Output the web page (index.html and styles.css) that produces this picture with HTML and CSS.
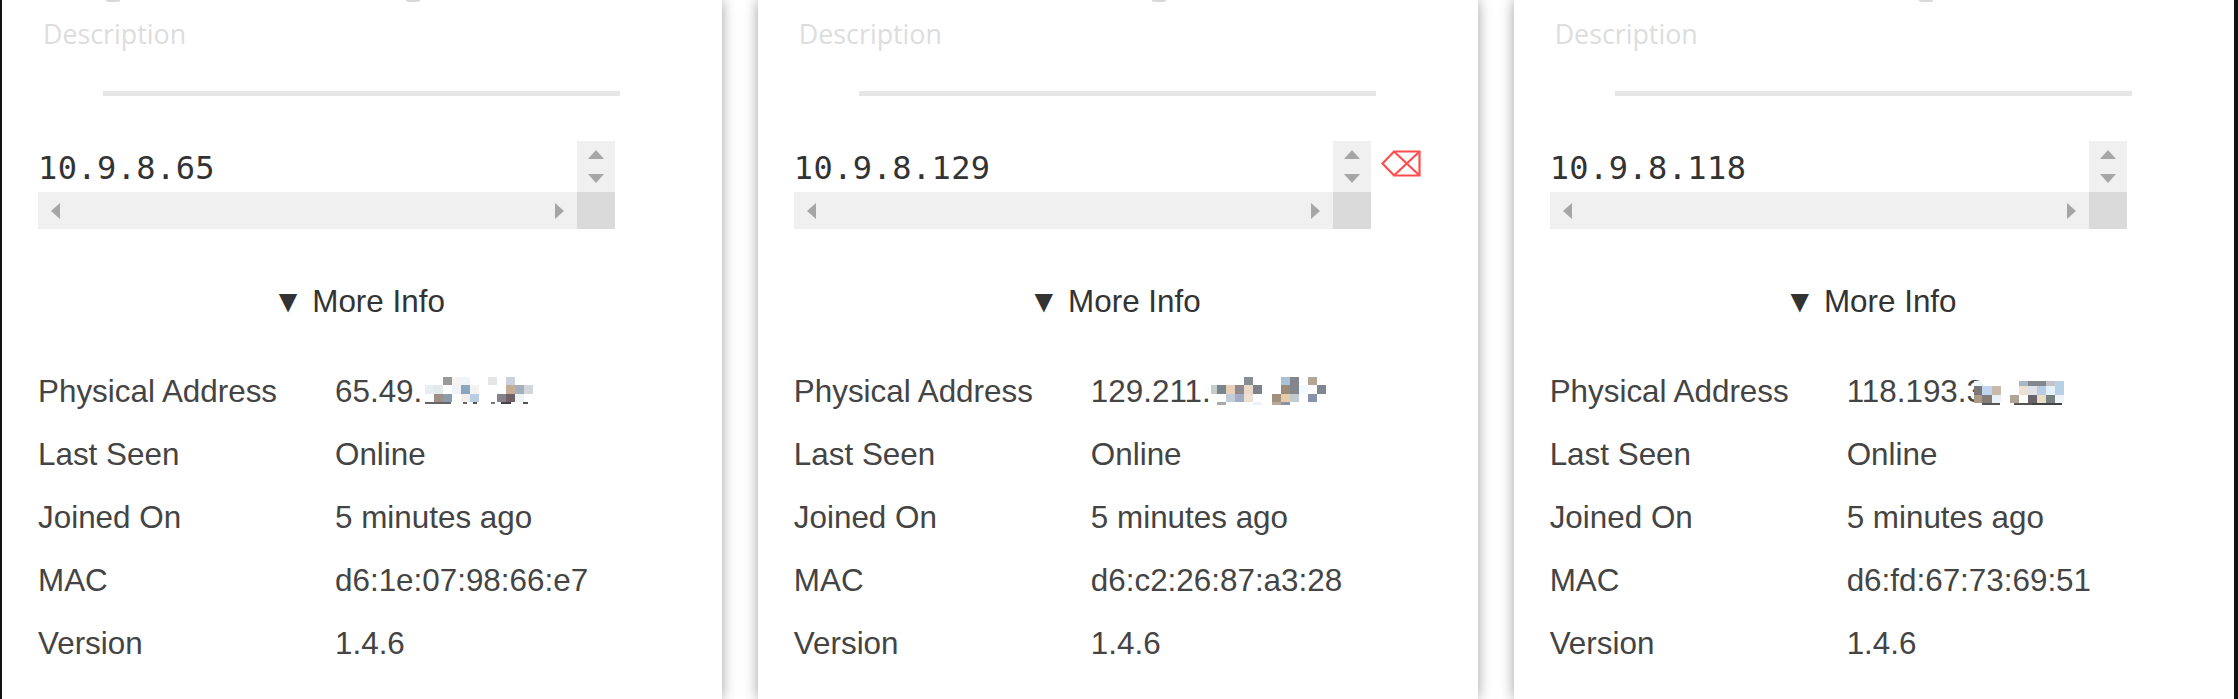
FILE: index.html
```html
<!DOCTYPE html>
<html lang="en">
<head>
  <meta charset="UTF-8" />
  <title>Peers</title>
  <link rel="stylesheet" href="styles.css">
</head>
<body>
  <div class="peers">

    <div class="card">
      <span class="tail tail-a"></span><span class="tail tail-b"></span>
      <div class="description">Description</div>
      <div class="divider"></div>
      <div class="ip-row">
        <div class="ip-box">
          <div class="ip-text">10.9.8.65</div>
          <div class="vbar"><i class="arrow up"></i><i class="arrow down"></i></div>
          <div class="hbar"><i class="arrow left"></i><i class="arrow right"></i></div>
          <div class="corner"></div>
        </div>
      </div>
      <div class="more">▼ More Info</div>
      <div class="info">
        <div>Physical Address</div>
        <div class="masked">65.49.<svg class="mosaic m1" width="108" height="34" viewBox="0 0 108 34">
          <rect x="18" y="0" width="9" height="8" fill="#999"/><rect x="27" y="0" width="9" height="8" fill="#f7f3ee"/><rect x="36" y="0" width="9" height="8" fill="#eef5fd"/><rect x="63" y="0" width="9" height="8" fill="#e5e5e5"/><rect x="81" y="0" width="9" height="8" fill="#c9d2dc"/>
          <rect x="0" y="8" width="9" height="9" fill="#e6edf3"/><rect x="9" y="8" width="9" height="9" fill="#e4eaea"/><rect x="27" y="8" width="9" height="9" fill="#eff4fb"/><rect x="36" y="8" width="9" height="9" fill="#8ba6bd"/><rect x="45" y="8" width="9" height="9" fill="#f3f3f3"/><rect x="81" y="8" width="9" height="9" fill="#c7ad98"/><rect x="90" y="8" width="9" height="9" fill="#a3b0ba"/><rect x="99" y="8" width="9" height="9" fill="#d2d8da"/>
          <rect x="9" y="17" width="9" height="8" fill="#9e8f89"/><rect x="18" y="17" width="9" height="8" fill="#8a9bab"/><rect x="36" y="17" width="9" height="8" fill="#f3eee9"/><rect x="45" y="17" width="9" height="8" fill="#b9cde5"/><rect x="72" y="17" width="9" height="8" fill="#84838b"/><rect x="81" y="17" width="9" height="8" fill="#6f6166"/><rect x="90" y="17" width="9" height="8" fill="#eef3f6"/>
          <rect x="-4" y="25" width="30" height="2" fill="#666"/><rect x="38" y="25" width="4" height="2" fill="#666"/><rect x="48" y="25" width="4" height="2" fill="#555"/><rect x="66" y="25" width="4" height="2" fill="#777"/><rect x="76" y="25" width="10" height="2" fill="#444"/><rect x="98" y="25" width="5" height="2" fill="#555"/>
        </svg></div>
        <div>Last Seen</div><div>Online</div>
        <div>Joined On</div><div>5 minutes ago</div>
        <div>MAC</div><div>d6:1e:07:98:66:e7</div>
        <div>Version</div><div>1.4.6</div>
      </div>
    </div>

    <div class="card">
      <span class="tail tail-c"></span>
      <div class="description">Description</div>
      <div class="divider"></div>
      <div class="ip-row">
        <div class="ip-box">
          <div class="ip-text">10.9.8.129</div>
          <div class="vbar"><i class="arrow up"></i><i class="arrow down"></i></div>
          <div class="hbar"><i class="arrow left"></i><i class="arrow right"></i></div>
          <div class="corner"></div>
        </div>
        <svg class="remove" width="40" height="28" viewBox="0 0 40 28" fill="none" stroke="#ff4d4d" stroke-width="2.2">
          <path d="M1.5 13.5 13 1.5H38.5V25.5H13Z"/><path d="M13 1.5 38.5 25.5M38.5 1.5 13 25.5"/>
        </svg>
      </div>
      <div class="more">▼ More Info</div>
      <div class="info">
        <div>Physical Address</div>
        <div class="masked">129.211.<svg class="mosaic m2" width="118" height="34" viewBox="0 0 118 34">
          <rect x="33" y="0" width="9" height="8" fill="#888e96"/><rect x="70" y="0" width="9" height="8" fill="#a9c2d8"/><rect x="79" y="0" width="9" height="8" fill="#85868d"/><rect x="97" y="0" width="9" height="8" fill="#b5a595"/>
          <rect x="0" y="8" width="6" height="9" fill="#c5cdc8"/><rect x="6" y="8" width="9" height="9" fill="#77858f"/><rect x="15" y="8" width="9" height="9" fill="#e8cfb8"/><rect x="24" y="8" width="9" height="9" fill="#8e8a90"/><rect x="33" y="8" width="9" height="9" fill="#ead9c8"/><rect x="42" y="8" width="9" height="9" fill="#7d8288"/><rect x="70" y="8" width="9" height="9" fill="#9a8b78"/><rect x="79" y="8" width="9" height="9" fill="#85868d"/><rect x="88" y="8" width="9" height="9" fill="#f0faff"/><rect x="106" y="8" width="9" height="9" fill="#7f8791"/>
          <rect x="15" y="17" width="9" height="8" fill="#c0ccd8"/><rect x="24" y="17" width="9" height="8" fill="#a2acc2"/><rect x="33" y="17" width="9" height="8" fill="#eee0d0"/><rect x="61" y="17" width="9" height="8" fill="#a39180"/><rect x="70" y="17" width="9" height="8" fill="#e8cba8"/><rect x="79" y="17" width="9" height="8" fill="#c0cbd0"/><rect x="97" y="17" width="9" height="8" fill="#8893ab"/>
          <rect x="6" y="25" width="9" height="3" fill="#aaa"/><rect x="42" y="25" width="9" height="3" fill="#eef2f8"/><rect x="61" y="25" width="9" height="3" fill="#b8a898"/><rect x="70" y="25" width="9" height="3" fill="#8793a8"/>
        </svg></div>
        <div>Last Seen</div><div>Online</div>
        <div>Joined On</div><div>5 minutes ago</div>
        <div>MAC</div><div>d6:c2:26:87:a3:28</div>
        <div>Version</div><div>1.4.6</div>
      </div>
    </div>

    <div class="card">
      <span class="tail tail-d"></span>
      <div class="description">Description</div>
      <div class="divider"></div>
      <div class="ip-row">
        <div class="ip-box">
          <div class="ip-text">10.9.8.118</div>
          <div class="vbar"><i class="arrow up"></i><i class="arrow down"></i></div>
          <div class="hbar"><i class="arrow left"></i><i class="arrow right"></i></div>
          <div class="corner"></div>
        </div>
      </div>
      <div class="more">▼ More Info</div>
      <div class="info">
        <div>Physical Address</div>
        <div class="masked">118.193.3<svg class="mosaic m3" width="92" height="34" viewBox="0 0 92 34">
          <rect x="0" y="4" width="8" height="5" fill="#f0f5f8"/><rect x="45" y="4" width="9" height="5" fill="#a8b6c6"/><rect x="54" y="4" width="18" height="5" fill="#85878f"/><rect x="72" y="4" width="9" height="5" fill="#c0c4ca"/><rect x="81" y="4" width="9" height="5" fill="#b8d0e6"/>
          <rect x="0" y="9" width="8" height="9" fill="#7d7678"/><rect x="8" y="9" width="10" height="9" fill="#c0d6ee"/><rect x="18" y="9" width="9" height="9" fill="#c8b9a8"/><rect x="45" y="9" width="9" height="9" fill="#eee0d2"/><rect x="54" y="9" width="9" height="9" fill="#dfe3e8"/><rect x="63" y="9" width="9" height="9" fill="#b8cce4"/><rect x="72" y="9" width="9" height="9" fill="#e4f0fa"/><rect x="81" y="9" width="9" height="9" fill="#b8d0e6"/>
          <rect x="0" y="18" width="8" height="8" fill="#ab9a86"/><rect x="8" y="18" width="10" height="8" fill="#857c78"/><rect x="18" y="18" width="9" height="8" fill="#eaf0f7"/><rect x="36" y="18" width="9" height="8" fill="#b0a598"/><rect x="54" y="18" width="9" height="8" fill="#68646a"/><rect x="63" y="18" width="9" height="8" fill="#e8dcc8"/><rect x="72" y="18" width="9" height="8" fill="#77807f"/><rect x="81" y="18" width="9" height="8" fill="#f0f4f8"/>
          <rect x="8" y="26" width="18" height="2" fill="#555"/><rect x="40" y="26" width="18" height="2" fill="#555"/><rect x="58" y="26" width="30" height="2" fill="#444"/>
        </svg></div>
        <div>Last Seen</div><div>Online</div>
        <div>Joined On</div><div>5 minutes ago</div>
        <div>MAC</div><div>d6:fd:67:73:69:51</div>
        <div>Version</div><div>1.4.6</div>
      </div>
    </div>

  </div>
</body>
</html>
```

FILE: styles.css
```css
html, body { height:100%; }
body { margin:0; background:#111; font-family:"Liberation Sans", Arial, sans-serif; color:#444; overflow:hidden; }

.peers { display:flex; gap:35.5px; height:100vh; margin:0 4px 0 2px; background:#fff; overflow:hidden; }
.card { position:relative; flex:1; min-width:0; background:#fff; box-shadow:0 0 13px rgba(0,0,0,0.38); box-sizing:border-box; padding:0 0 0 36px; }

/* bottoms of the title letters, the title itself is cut off by the picture */
.tail { position:absolute; top:0; width:14px; height:2px; background:#d8d8d8; border-radius:0 0 50% 50%; }
.tail-a { left:104px; }
.tail-b { left:404px; }
.tail-c { left:394px; }
.tail-d { left:405px; }

.description { font-family:"Open Sans", sans-serif; font-size:26.8px; line-height:36px; height:36px; margin:16px 0 0 5px; color:#ddd; }
.divider { width:517px; height:5px; margin:39px 0 45px 65px; background:#e6e6e6; }

.ip-row { display:flex; align-items:flex-start; gap:10px; }
.ip-box { display:grid; grid-template-columns:539px 38px; grid-template-rows:51px 37px; width:577px; height:88px; }
.ip-text { font-family:"DejaVu Sans Mono", monospace; font-size:32px; letter-spacing:0.4px; line-height:51px; padding-top:2px; color:#333; box-sizing:border-box; }
.remove { margin-top:9px; }

.vbar { display:flex; flex-direction:column; align-items:center; justify-content:space-between; padding:9px 0; box-sizing:border-box; background:#f0f0f0; }
.hbar { display:flex; align-items:center; justify-content:space-between; padding:0 13px; background:#f0f0f0; }
.corner { background:#dadada; }

.arrow { display:block; width:0; height:0; border-style:solid; border-color:transparent; }
.arrow.up { border-width:0 8.5px 9px; border-bottom-color:#a6a6a6; }
.arrow.down { border-width:9px 8.5px 0; border-top-color:#a6a6a6; }
.arrow.left { border-width:8.5px 9px 8.5px 0; border-right-color:#a6a6a6; }
.arrow.right { border-width:8.5px 0 8.5px 9px; border-left-color:#a6a6a6; }

.more { font-size:31.4px; line-height:36px; margin:55px 43px 0 0; text-align:center; color:#333; }

.info { display:grid; grid-template-columns:297px 1fr; grid-auto-rows:62.8px; align-items:center; margin-top:41px; font-size:31.4px; line-height:36px; }
.masked { white-space:nowrap; }
.mosaic { vertical-align:-9px; }
.m1 { margin-left:3px; }
.m2 { margin-left:0; }
.m3 { margin-left:-10px; }
```
